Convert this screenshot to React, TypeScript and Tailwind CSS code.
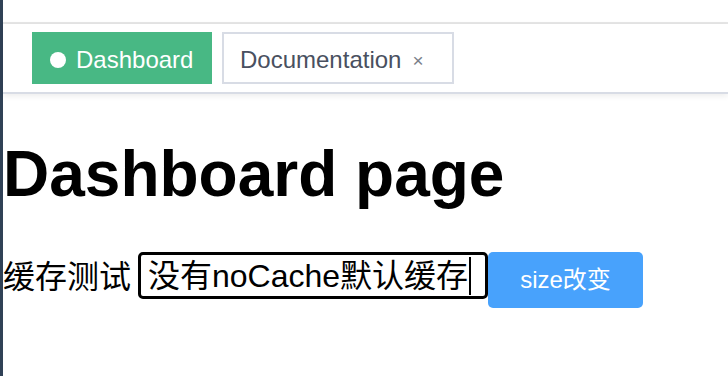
import React from 'react';

const SANS = "font-['Liberation_Sans','Noto_Sans_CJK_SC',sans-serif]";

function TagsView() {
  return (
    <div className="h-[70px] border-b-2 border-[#d8dce5] shadow-[0_2px_6px_rgba(0,0,0,0.08)] bg-white flex items-start pt-[8px] pl-[29px] gap-[10px]">
      {/* active tag */}
      <div className="h-[52px] w-[180px] bg-[#48b884] text-white flex items-center pl-[18px] text-[24px]">
        <span className="w-[16px] h-[16px] rounded-full bg-white mr-[10px] mt-[3px]" />
        <span className="leading-none pt-[4px]">Dashboard</span>
      </div>
      <div className="h-[52px] w-[232px] border-2 border-[#d8dce5] text-[#495060] flex items-center pl-[16px] text-[24px]">
        <span className="leading-none pt-[4px]">Documentation</span>
        <span className="ml-[11px] pt-[4px] text-[19px] text-[#7a7f8a] leading-none">×</span>
      </div>
    </div>
  );
}

export default function App() {
  return (
    <div className={`w-[728px] h-[376px] flex bg-white overflow-hidden ${SANS}`}>
      <div className="w-[3px] bg-[#304156] shrink-0" />
      <div className="flex-1 flex flex-col">
        <div className="h-[24px] border-b-2 border-[#e6e6e6] shrink-0" />
        <TagsView />
        <h1 className="mt-[48px] text-[64px] font-bold leading-[64px] text-black">Dashboard page</h1>
        <div className="mt-[46px] flex items-start">
          <span className="text-[32px] leading-[51px] text-black mr-[7px]">缓存测试</span>
          <div className="w-[350px] h-[47px] border-[3px] border-black rounded-[5px] flex items-center pl-[7px]">
            <span className="text-[32px] leading-none text-black whitespace-nowrap">没有noCache默认缓存</span>
            <span className="w-[2px] h-[38px] bg-black ml-[1px]" />
          </div>
          <button className="w-[155px] h-[56px] bg-[#48a2fc] text-white rounded-[5px] text-[24px] leading-none">
            size改变
          </button>
        </div>
      </div>
    </div>
  );
}
